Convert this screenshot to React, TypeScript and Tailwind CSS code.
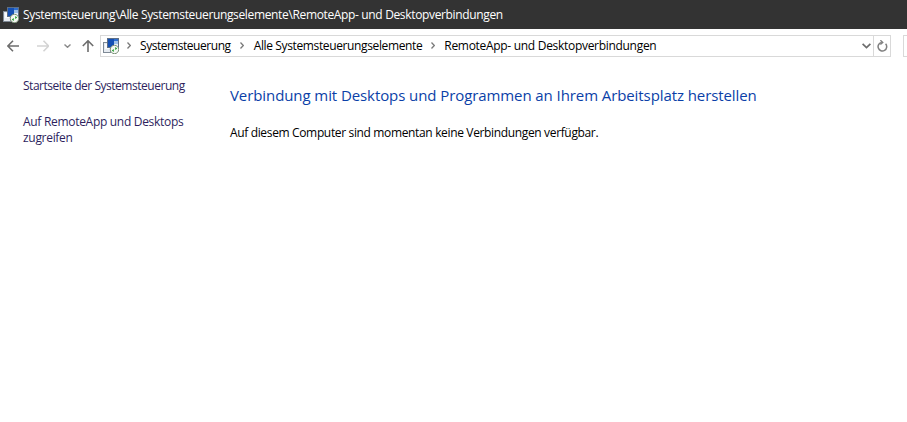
// Systemsteuerung: RemoteApp- und Desktopverbindungen
const font = "font-['Open_Sans','Noto_Sans',sans-serif]";

function RemoteIcon() {
  return (
    <svg width="16" height="16" viewBox="0 0 16 16" className="shrink-0">
      <rect x="0.5" y="4.5" width="7" height="10" fill="#e6ebf1" stroke="#7f8a96" />
      <rect x="2" y="6" width="4" height="5" fill="#fafbfc" />
      <rect x="4.5" y="0.5" width="11" height="9" fill="#e8eef6" stroke="#5d6f86" />
      <rect x="5" y="1" width="6" height="8" fill="#1450b4" />
      <rect x="11" y="1" width="4" height="2" fill="#2f6fd0" />
      <rect x="11" y="3" width="4" height="3" fill="#9dc0ea" />
      <circle cx="11.5" cy="11.5" r="4.2" fill="#f4f7f2" stroke="#7c9179" />
      <path d="M8.8 12.6l2-1.5v3zM14.2 10.4l-2-1.5v3z" fill="#1f9a2a" />
    </svg>
  );
}

function Arrow({ dir, color }: { dir: "left" | "right" | "up"; color: string }) {
  const d = {
    left: "M0.5 6H12 M6 0.8 L0.8 6 L6 11.2",
    right: "M0 6H11.5 M6.5 0.8 L11.7 6 L6.5 11.2",
    up: "M6 12V0.8 M0.8 6 L6 0.8 L11.2 6",
  }[dir];
  return (
    <svg width="12" height="12" viewBox="0 0 12 12" fill="none" stroke={color} strokeWidth="1.6" className="shrink-0">
      <path d={d} />
    </svg>
  );
}

function Crumb() {
  return (
    <svg width="4" height="7" viewBox="0 0 4 7" fill="none" stroke="#7a7a7a" strokeWidth="1.3" className="shrink-0">
      <path d="M0.5 0.5L3.3 3.5L0.5 6.5" />
    </svg>
  );
}

export default function App() {
  return (
    <div className={`flex h-[422px] w-[907px] flex-col overflow-hidden bg-white ${font}`}>
      <div className="flex h-[29px] items-center gap-[4px] bg-[#333333] pl-[3px] text-[12px] text-white">
        <RemoteIcon />
        <span className="tracking-[-0.35px]">Systemsteuerung\Alle Systemsteuerungselemente\RemoteApp- und Desktopverbindungen</span>
      </div>

      <div className="flex h-[33px] items-center pl-[7px]">
        <Arrow dir="left" color="#6d6d6d" />
        <div className="ml-[18px]">
          <Arrow dir="right" color="#d3d3d3" />
        </div>
        <svg width="7" height="4" viewBox="0 0 7 4" fill="none" stroke="#8a8a8a" strokeWidth="1.4" className="ml-[15px] shrink-0">
          <path d="M0.5 0.5L3.5 3.3L6.5 0.5" />
        </svg>
        <div className="ml-[11px]">
          <Arrow dir="up" color="#6d6d6d" />
        </div>
        <div className="ml-[6px] flex h-[22px] w-[791px] items-center border border-[#d9d9d9] pl-[2px] text-[12px] text-black">
          <RemoteIcon />
          <div className="ml-[8px]">
            <Crumb />
          </div>
          <span className="ml-[9px] tracking-[-0.45px]">Systemsteuerung</span>
          <div className="ml-[9px]">
            <Crumb />
          </div>
          <span className="ml-[10px] tracking-[-0.37px]">Alle Systemsteuerungselemente</span>
          <div className="ml-[9px]">
            <Crumb />
          </div>
          <span className="ml-[9px] tracking-[-0.3px]">RemoteApp- und Desktopverbindungen</span>
          <svg width="9" height="6" viewBox="0 0 9 6" fill="none" stroke="#6d6d6d" strokeWidth="1.7" className="ml-auto mr-[2px] shrink-0">
            <path d="M0.6 0.8L4.5 4.6L8.4 0.8" />
          </svg>
          <div className="flex h-full w-[17px] items-center justify-center border-l border-[#d9d9d9]">
            <svg width="11" height="12" viewBox="0 0 11 12" fill="none" stroke="#7f7f7f" strokeWidth="1.5">
              <path d="M8.6 3.8A4.3 4.3 0 1 1 4.8 2.4" />
              <path d="M3.4 0.2L5.8 2.4L3.4 4.6" strokeWidth="1.3" />
            </svg>
          </div>
        </div>
        <div className="ml-[12px] h-[22px] flex-1 border-y border-l border-[#d9d9d9]" />
      </div>

      <div className="flex flex-1">
        <div className="w-[230px] pl-[23px] pt-[16px] text-[12px] leading-[16px] text-[#2e1f5e]">
          <div className="tracking-[-0.47px]">Startseite der Systemsteuerung</div>
          <div className="mt-[20px] w-[170px] tracking-[-0.3px]">Auf RemoteApp und Desktops zugreifen</div>
        </div>
        <div className="pt-[23px]">
          <h1 className="text-[15px] leading-[20px] font-normal tracking-[-0.085px] text-[#0b3fa8]">
            Verbindung mit Desktops und Programmen an Ihrem Arbeitsplatz herstellen
          </h1>
          <p className="mt-[20px] text-[12px] leading-[16px] tracking-[-0.35px] text-black">
            Auf diesem Computer sind momentan keine Verbindungen verfügbar.
          </p>
        </div>
      </div>
    </div>
  );
}
